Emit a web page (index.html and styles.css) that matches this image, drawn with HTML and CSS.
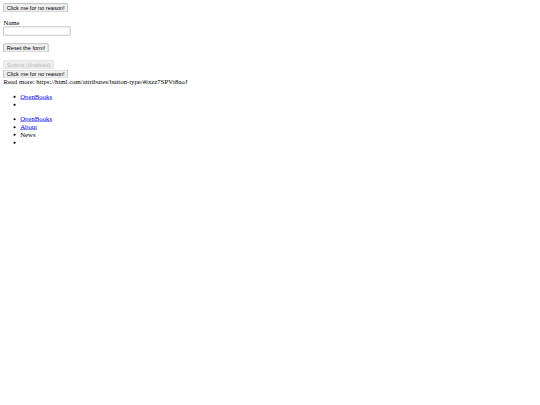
FILE: index.html
```html
<!DOCTYPE html>
<html class="root">
<head>
<meta charset="utf-8">
<link rel="stylesheet" href="styles.css">
</head>
<body class="page">
<div class="viewport">
<button class="btn" type="button">Click me for no reason!</button>
<form class="form">
  <p class="field field-name"><label class="label" for="name">Name</label><br><input class="input" id="name" type="text"></p>
  <p class="field field-reset"><button class="btn" type="reset">Reset the form!</button></p>
  <div class="stack"><button class="btn" type="submit" disabled>Submit (disabled)</button><br><button class="btn btn-second" type="button">Click me for no reason!</button></div>
</form>
<div class="readmore">Read more: https://html.com/attributes/button-type/#ixzz7SPVt8aoJ</div>
<ul class="list">
  <li><a class="link" href="#">OpenBooks</a></li>
  <li></li>
</ul>
<ul class="list">
  <li><a class="link" href="#">OpenBooks</a></li>
  <li><a class="link" href="#">About</a></li>
  <li>News</li>
  <li></li>
</ul>
</div>
</body>
</html>
```
FILE: styles.css
```css
.root {
  background: #fff;
  overflow: hidden;
}
.page {
  margin: 0;
  overflow: hidden;
  width: 540px;
  height: 405px;
}
.viewport {
  box-sizing: border-box;
  width: 1280px;
  padding: 8px;
  transform: scale(0.421875);
  transform-origin: 0 0;
  font-family: "Liberation Serif", serif;
  font-size: 16px;
  color: #000;
}
.btn {
  font-family: "Liberation Sans", Arial, sans-serif;
  font-size: 13.333px;
  vertical-align: top;
}
.btn-second {
  margin-top: 1px;
}
.input {
  box-sizing: border-box;
  width: 159px;
  height: 21px;
  font-family: "Liberation Sans", Arial, sans-serif;
  font-size: 13.333px;
  border: 1px solid #767676;
  border-radius: 2px;
}
.form {
  margin: 0;
}
.field {
  margin: 16px 0;
}
.field-name {
  margin-bottom: 19px;
}
.field-reset {
  margin-bottom: 19px;
}
.stack {
  margin: 0;
  line-height: 0;
}
.readmore {
  margin: 0;
}
.list {
  margin: 16px 0;
  padding-left: 40px;
  line-height: 18.6px;
}
.link {
  color: #0000ee;
}
```
